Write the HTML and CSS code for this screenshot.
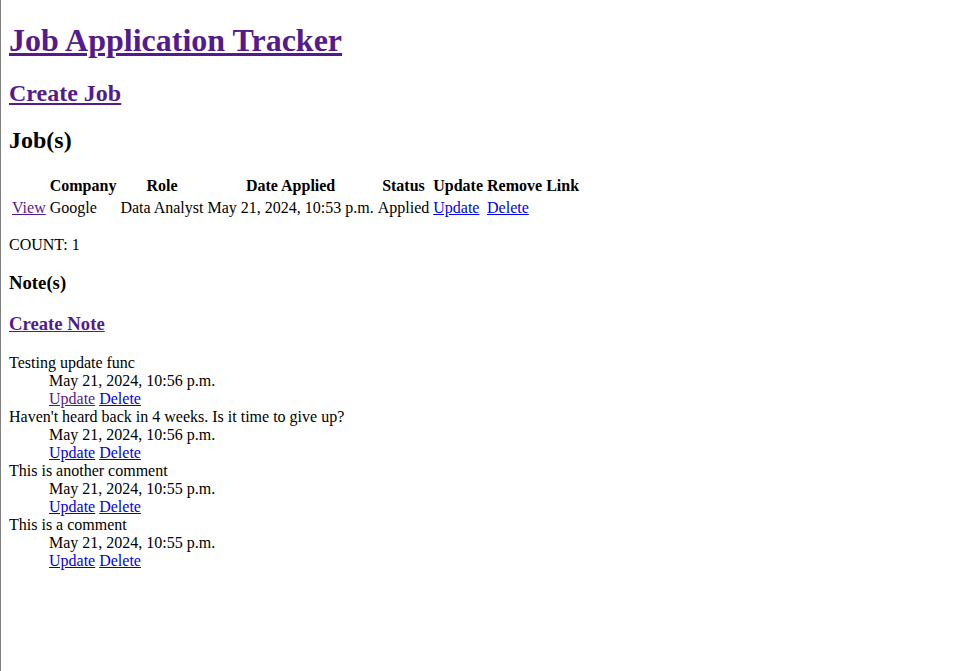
FILE: index.html
```html
<!DOCTYPE html>
<html>
<head>
<meta charset="utf-8">
<title>Job Application Tracker</title>
<link rel="stylesheet" href="styles.css">
</head>
<body>
<h1 class="title"><a class="visited" href="#">Job Application Tracker</a></h1>
<h2><a class="visited" href="#">Create Job</a></h2>
<h2>Job(s)</h2>
<table>
<tr><th></th><th>Company</th><th>Role</th><th>Date Applied</th><th>Status</th><th>Update</th><th>Remove</th><th>Link</th></tr>
<tr><td><a class="visited" href="#">View</a></td><td>Google</td><td>Data Analyst</td><td>May 21, 2024, 10:53 p.m.</td><td>Applied</td><td><a class="link" href="#">Update</a></td><td><a class="link" href="#">Delete</a></td><td></td></tr>
</table>
<p>COUNT: 1</p>
<h3>Note(s)</h3>
<h3><a class="visited" href="#">Create Note</a></h3>
<dl>
<dt>Testing update func</dt>
<dd>May 21, 2024, 10:56 p.m.</dd>
<dd><a class="visited" href="#">Update</a> <a class="link" href="#">Delete</a></dd>
<dt>Haven't heard back in 4 weeks. Is it time to give up?</dt>
<dd>May 21, 2024, 10:56 p.m.</dd>
<dd><a class="link" href="#">Update</a> <a class="link" href="#">Delete</a></dd>
<dt>This is another comment</dt>
<dd>May 21, 2024, 10:55 p.m.</dd>
<dd><a class="link" href="#">Update</a> <a class="link" href="#">Delete</a></dd>
<dt>This is a comment</dt>
<dd>May 21, 2024, 10:55 p.m.</dd>
<dd><a class="link" href="#">Update</a> <a class="link" href="#">Delete</a></dd>
</dl>
</body>
</html>
```
FILE: styles.css
```css
html {
  border-left: 1px solid #808080;
  min-height: 100%;
  box-sizing: border-box;
}
body {
  font-family: "Liberation Serif", "Times New Roman", serif;
  font-size: 16px;
  color: #000;
}
.title {
  margin-top: 14.44px;
  margin-bottom: 20.44px;
}
.visited { color: #551a8b; }
.link { color: #0000ee; }
```
